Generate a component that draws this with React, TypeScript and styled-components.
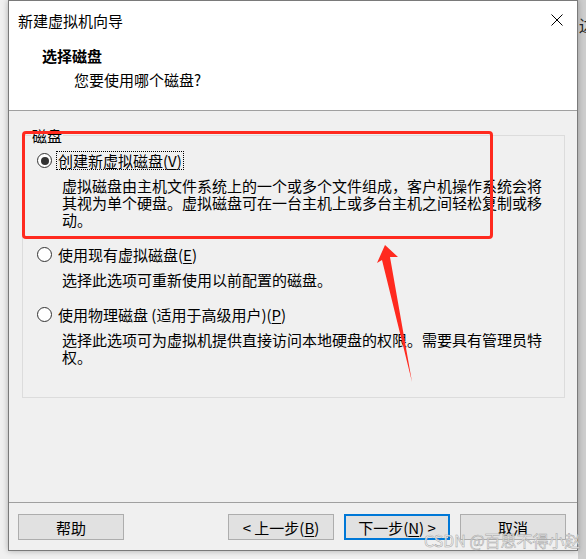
import React from 'react';
import styled, { createGlobalStyle } from 'styled-components';

const GlobalStyle = createGlobalStyle`
  html, body {
    margin: 0;
    padding: 0;
    background: #f0f0f0;
  }
  body {
    font-family: "Noto Sans CJK SC", "Noto Sans", sans-serif;
    font-size: 15px;
    color: #000;
  }
`;

const Screen = styled.div`
  position: relative;
  width: 586px;
  height: 559px;
  overflow: hidden;
  display: flex;
  background: #f0f0f0;
`;

const LeftGap = styled.div`
  width: 8px;
  flex: none;
`;

const RightStrip = styled.div`
  flex: 1;
  height: 100%;
  background: #cdcdcd;
  overflow: hidden;
  span {
    display: block;
    margin: 15px 0 0 1px;
    font-size: 16px;
    line-height: 20px;
    color: #222;
    white-space: nowrap;
  }
`;

const Window = styled.div`
  width: 570px;
  height: 551px;
  box-sizing: border-box;
  border: 1px solid #7a7a7a;
  display: flex;
  flex-direction: column;
  background: #f0f0f0;
  box-shadow: 0 0 6px rgba(0, 0, 0, 0.28);
  flex: none;
  position: relative;
  z-index: 1;
`;

const Top = styled.div`
  height: 109px;
  background: #fff;
  border-bottom: 1px solid #a0a0a0;
  flex: none;
`;

const TitleBar = styled.div`
  height: 38px;
  display: flex;
  align-items: center;
  justify-content: space-between;
  padding: 0 14px 0 9px;
  font-size: 15px;
  line-height: 17px;
`;

const Header = styled.div`
  padding: 8px 0 0 33px;
  line-height: 17px;
  h1 {
    margin: 0;
    font-size: 15px;
    font-weight: 700;
  }
  p {
    margin: 7px 0 0 32px;
    font-size: 15px;
  }
`;

const Body = styled.div`
  flex: 1;
  padding: 0 12px 0 13px;
`;

const Group = styled.fieldset`
  margin: 16px 0 0;
  padding: 7px 0 32px 14px;
  border: 1px solid #dcdcdc;
  min-width: 0;
  display: flex;
  flex-direction: column;
  gap: 17px;
`;

const Legend = styled.legend`
  padding: 0 1px;
  margin-left: -6px;
  font-size: 15px;
  line-height: 17px;
`;

const Option = styled.div`
  display: flex;
  flex-direction: column;
`;

const Row = styled.div`
  display: flex;
  align-items: center;
  height: 19px;
  gap: 5px;
`;

const Radio = styled.span<{ $checked?: boolean }>`
  width: 15px;
  height: 15px;
  box-sizing: border-box;
  border-radius: 50%;
  border: 1px solid #333;
  background: #fff;
  display: flex;
  align-items: center;
  justify-content: center;
  flex: none;
  &::after {
    content: '';
    width: 8px;
    height: 8px;
    border-radius: 50%;
    background: ${(p) => (p.$checked ? '#333' : 'transparent')};
  }
`;

const Label = styled.span<{ $focused?: boolean }>`
  font-size: 15px;
  line-height: 17px;
  padding: 0 1px;
  outline: ${(p) => (p.$focused ? '1px dotted #000' : 'none')};
  outline-offset: 0;
  white-space: nowrap;
`;

const Desc = styled.div`
  margin: 7px 0 0 25px;
  width: 483px;
  font-size: 15px;
  line-height: 17px;
`;

const U = styled.span`
  text-decoration: underline;
  text-underline-offset: 2px;
`;

const Footer = styled.div`
  flex: none;
  border-top: 1px solid #a0a0a0;
  padding: 11px 11px 10px 9px;
  display: flex;
  align-items: center;
  gap: 10px;
`;

const Spacer = styled.div`
  flex: 1;
`;

const Button = styled.button<{ $primary?: boolean }>`
  width: 106px;
  height: 26px;
  box-sizing: border-box;
  padding: 0;
  background: #e1e1e1;
  border: ${(p) => (p.$primary ? '2px solid #0078d7' : '1px solid #adadad')};
  font-family: "Noto Sans CJK SC", "Noto Sans", sans-serif;
  font-size: 15px;
  line-height: 17px;
  color: #000;
  display: flex;
  align-items: center;
  justify-content: center;
`;

const Annotation = styled.div`
  position: absolute;
  left: 22px;
  top: 131px;
  width: 471px;
  height: 108px;
  box-sizing: border-box;
  border: 3px solid #ff2a1f;
  border-radius: 4px;
  z-index: 2;
  pointer-events: none;
`;

const Arrow = styled.svg`
  position: absolute;
  left: 0;
  top: 0;
  z-index: 2;
  pointer-events: none;
`;

const Watermark = styled.div`
  position: absolute;
  left: 424px;
  top: 531px;
  font-size: 16px;
  line-height: 19px;
  color: rgba(248, 248, 248, 0.9);
  -webkit-text-stroke: 0.5px #a2a2a2;
  z-index: 3;
  white-space: nowrap;
`;

const CloseIcon = () => (
  <svg width="12" height="12" viewBox="0 0 12 12">
    <path d="M0.5 0.5 L11.5 11.5 M11.5 0.5 L0.5 11.5" stroke="#000" strokeWidth="1" fill="none" />
  </svg>
);

export default function App() {
  return (
    <>
      <GlobalStyle />
      <Screen>
        <LeftGap />
        <Window>
          <Top>
            <TitleBar>
              <span>新建虚拟机向导</span>
              <CloseIcon />
            </TitleBar>
            <Header>
              <h1>选择磁盘</h1>
              <p>您要使用哪个磁盘?</p>
            </Header>
          </Top>
          <Body>
            <Group>
              <Legend>磁盘</Legend>
              <Option>
                <Row>
                  <Radio $checked />
                  <Label $focused>
                    创建新虚拟磁盘(<U>V</U>)
                  </Label>
                </Row>
                <Desc>
                  虚拟磁盘由主机文件系统上的一个或多个文件组成，客户机操作系统会将其视为单个硬盘。虚拟磁盘可在一台主机上或多台主机之间轻松复制或移动。
                </Desc>
              </Option>
              <Option>
                <Row>
                  <Radio />
                  <Label>
                    使用现有虚拟磁盘(<U>E</U>)
                  </Label>
                </Row>
                <Desc>选择此选项可重新使用以前配置的磁盘。</Desc>
              </Option>
              <Option>
                <Row>
                  <Radio />
                  <Label>
                    使用物理磁盘 (适用于高级用户)(<U>P</U>)
                  </Label>
                </Row>
                <Desc>
                  选择此选项可为虚拟机提供直接访问本地硬盘的权限。需要具有管理员特权。
                </Desc>
              </Option>
            </Group>
          </Body>
          <Footer>
            <Button>帮助</Button>
            <Spacer />
            <Button>
              &lt; 上一步(<U>B</U>)
            </Button>
            <Button $primary>
              下一步(<U>N</U>) &gt;
            </Button>
            <Button>取消</Button>
          </Footer>
        </Window>
        <RightStrip>
          <span>边</span>
        </RightStrip>
        <Annotation />
        <Arrow width="586" height="559" viewBox="0 0 586 559">
          <polygon points="385,245 377,263 382,260 412,382 390,257 398,257" fill="#ff2a1f" />
        </Arrow>
        <Watermark>CSDN @百思不得小赵</Watermark>
      </Screen>
    </>
  );
}
